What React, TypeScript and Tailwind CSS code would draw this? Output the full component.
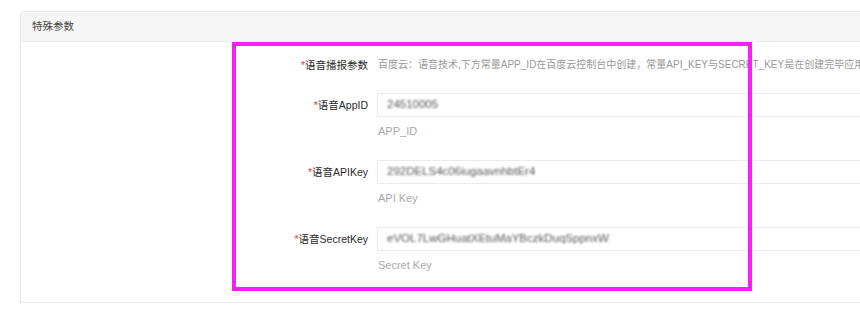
const FONT = '"Liberation Sans", "Noto Sans CJK SC", sans-serif'

const FIELDS = [
  { label: '语音AppID', value: '24510005', help: 'APP_ID' },
  { label: '语音APIKey', value: '292DELS4c06iugaavnhbtEr4', help: 'API Key' },
  { label: '语音SecretKey', value: 'eVOL7LwGHuatXEtuMaYBczkDuqSppnxW', help: 'Secret Key' },
]

function Label({ text }: { text: string }) {
  return (
    <div className="w-[356px] shrink-0 pr-[9px] text-right text-[10.5px] leading-[24px] text-[#2a2a2a]">
      <span className="text-[#e4393c]">*</span>
      {text}
    </div>
  )
}

export default function App() {
  return (
    <div className="relative h-[310px] w-[860px] overflow-hidden bg-white" style={{ fontFamily: FONT }}>
      <div className="ml-5 mt-[11px] w-[900px] rounded-t-[3px] border border-[#e8e8e8] bg-white">
        <div className="flex h-[30px] items-center border-b border-[#ececec] bg-[#f5f5f5] px-[11px] text-[10.5px] text-[#444]">
          特殊参数
        </div>

        <div className="pb-[28px] pt-[11px]">
          <div className="mb-[16px] flex">
            <Label text="语音播报参数" />
            <div className="whitespace-nowrap pl-[1px] text-[10px] leading-[24px] text-[#999]">
              百度云：语音技术,下方常量APP_ID在百度云控制台中创建，常量API_KEY与SECRET_KEY是在创建完毕应用后生成
            </div>
          </div>

          {FIELDS.map((f, i) => (
            <div key={f.label} className={i < FIELDS.length - 1 ? 'mb-[20px]' : ''}>
              <div className="flex">
                <Label text={f.label} />
                <div className="flex h-[24px] flex-1 items-center border border-[#ebebeb] px-[9px]">
                  <span className="blur-[1.2px] text-[11.5px] text-[#555]">{f.value}</span>
                </div>
              </div>
              <div className="ml-[357px] mt-[5px] text-[11px] leading-[18px] text-[#aaa]">{f.help}</div>
            </div>
          ))}
        </div>
      </div>

      <div className="absolute left-[232px] top-[42px] h-[249px] w-[520px] border-[4px] border-[#f61ff6]" />
    </div>
  )
}
